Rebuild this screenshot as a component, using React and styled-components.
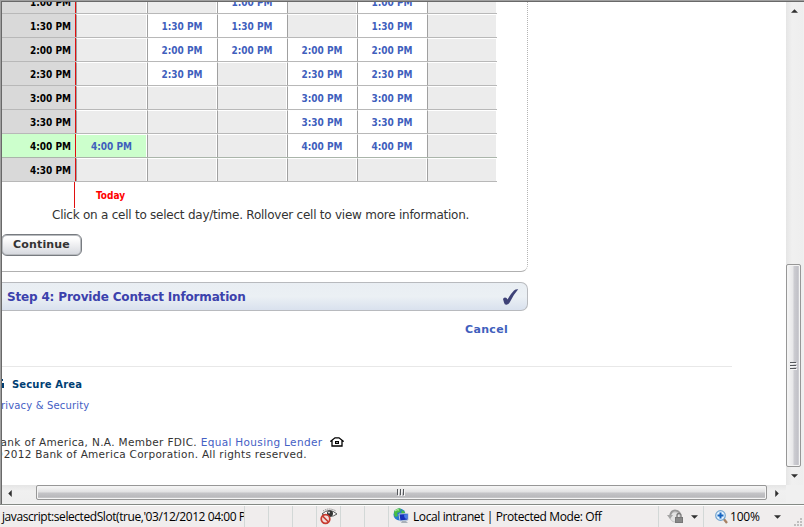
import React from "react";
import styled, { createGlobalStyle, css } from "styled-components";

const Global = createGlobalStyle`
  * { box-sizing: border-box; }
  body { margin: 0; background: #fff; overflow: hidden; font-family: "DejaVu Sans", Verdana, sans-serif; }
`;

const Window = styled.div`
  width: 804px;
  height: 527px;
  display: grid;
  grid-template-rows: 504px 23px;
  background: #f0f0f0;
`;
const Frame = styled.div`
  display: grid;
  grid-template-columns: 784px 17px;
  grid-template-rows: 483px 17px;
  border-top: 1px solid #a0a0a0;
  border-left: 1px solid #a0a0a0;
  box-shadow: inset 1px 1px 0 #696969;
  padding: 1px 0 0 1px;
`;
const Viewport = styled.div`
  overflow: hidden;
  background: #fff;
`;

const Panel = styled.section`
  width: 526px;
  height: 270px;
  overflow: hidden;
  border-bottom: 1px solid #b0b0b0;
  border-right: 1px dotted #b4b4b4;
  border-bottom-right-radius: 7px;
`;
const Schedule = styled.div`
  width: 495px;
  margin-top: -12px;
`;
const SlotRow = styled.div`
  display: grid;
  grid-template-columns: 73px 1px 71px repeat(5, 70px);
  grid-template-rows: 23px;
  height: 24px;
  border-bottom: 1px solid ${(p) => (p.$selected ? "#aab5aa" : "#b8b8b8")};
`;
const slotText = css`
  font: bold 10px/24px "DejaVu Sans Condensed", "DejaVu Sans", sans-serif;
  font-stretch: condensed;
  white-space: nowrap;
`;
const TimeLabel = styled.div`
  ${slotText}
  line-height: 26px;
  text-align: right;
  padding-right: 4px;
  color: #000;
  background: ${(p) => (p.$selected ? "#ccffcc" : "#d9d9d9")};
`;
const NowMarker = styled.div`
  background: #e01010;
`;
const Slot = styled.div`
  ${slotText}
  text-align: center;
  color: #3f5fbd;
  border-left: 1px solid #a0a0a0;
  border-top: 1px solid #fff;
  border-right: 1px solid #fff;
  background: ${(p) => (p.$selected ? "#ccffcc" : p.$open ? "#fff" : "#ececec")};
  ${(p) => p.$selected && "border-left-color: #ccffcc;"}
`;
const TodayRow = styled.div`
  height: 26px;
  margin-left: 72px;
  border-left: 1px solid #e01010;
  padding-left: 21px;
  ${slotText}
  line-height: 28px;
  color: #f00;
`;
const Instruction = styled.p`
  margin: 0 0 0 50px;
  font-size: 12px;
  line-height: 15px;
  height: 26px;
  white-space: nowrap;
  color: #333;
  letter-spacing: -0.24px;
`;
const ContinueButton = styled.button`
  display: block;
  width: 81px;
  height: 22px;
  margin: 0 0 0 -1px;
  padding: 0 0 2px 0;
  border: 1px solid #777b80;
  border-radius: 6px;
  box-shadow: inset 0 0 0 1px #b9bcc0;
  background: linear-gradient(#fff 15%, #f1f1f3 45%, #d5d8de);
  color: #333;
  font: bold 11px "DejaVu Sans", sans-serif;
  letter-spacing: 0.15px;
`;

const StepBar = styled.section`
  display: flex;
  align-items: center;
  justify-content: space-between;
  width: 526px;
  height: 29px;
  margin-top: 10px;
  padding: 0 8px 0 5px;
  border: solid #b8babe;
  border-width: 1px 1px 1px 0;
  border-radius: 0 7px 7px 0;
  background: linear-gradient(#e9eef3, #ebf0f4 50%, #d9e1ee);
`;
const StepTitle = styled.h2`
  margin: 0;
  font: bold 12px "DejaVu Sans", sans-serif;
  letter-spacing: -0.17px;
  color: #3c42ac;
  white-space: nowrap;
`;
const CancelRow = styled.div`
  display: flex;
  justify-content: flex-end;
  width: 506px;
  height: 55px;
  padding-top: 11px;
`;
const Cancel = styled.a`
  font: bold 11px/16px "DejaVu Sans", sans-serif;
  letter-spacing: 0.3px;
  color: #3f5fbd;
`;
const Footer = styled.footer`
  width: 730px;
  border-top: 1px solid #e8e8e8;
  font-size: 10px;
  color: #333;
`;
const SecureLine = styled.div`
  display: flex;
  align-items: center;
  gap: 5px;
  height: 14px;
  margin-top: 10px;
  font-weight: bold;
  letter-spacing: 0.15px;
  color: #003e73;
`;
const FooterLink = styled.a`
  color: #4460c4;
`;
const FooterLine = styled.div`
  display: flex;
  align-items: center;
  height: 12px;
  margin-top: ${(p) => p.$gap || 0}px;
  margin-left: ${(p) => p.$shift}px;
  font-size: ${(p) => p.$size || 10}px;
  letter-spacing: ${(p) => p.$spacing || 0}px;
  white-space: pre;
`;

const VScroll = styled.div`
  display: grid;
  grid-template-rows: 17px 245px 203px 18px;
  background: linear-gradient(90deg, #e5e5e5, #f0f0f0 35%, #eee);
`;
const HScroll = styled.div`
  display: grid;
  grid-template-columns: 34px 731px 19px;
  background: linear-gradient(#e5e5e5, #f0f0f0 35%, #eee);
`;
const ArrowBox = styled.div`
  display: flex;
  align-items: center;
  justify-content: center;
  ${(p) => p.$start && "width: 16px;"}
`;
const Thumb = styled.div`
  display: flex;
  align-items: center;
  justify-content: center;
  border: 1px solid #979797;
  border-radius: 2px;
  box-shadow: inset 0 0 0 1px #f4f4f4;
  background: ${(p) =>
    p.$vertical
      ? "linear-gradient(90deg, #f3f3f3 10%, #e6e6e8 48%, #cdcdd2 52%, #c2c2c8 82%, #dedee2)"
      : "linear-gradient(#f3f3f3 10%, #e0e0e1 48%, #c5c5c8 52%, #bababd 82%, #d5d5d7)"};
  ${(p) => (p.$vertical ? "width: 15px;" : "height: 15px; padding-right: 2px;")}
`;

const StatusBar = styled.footer`
  display: grid;
  grid-template-columns: 245px repeat(6, 24px) 270px 45px 100px;
  border-top: 1px solid #858a85;
  box-shadow: inset 0 1px 0 #fff;
  background: #f0eded;
  padding-top: 1px;
  font: 12px/21px "Open Sans", "Noto Sans", sans-serif;
  color: #000;
`;
const StatusCell = styled.div`
  display: flex;
  align-items: center;
  overflow: hidden;
  white-space: nowrap;
  padding-left: ${(p) => p.$pad || 0}px;
  gap: ${(p) => p.$gap || 0}px;
  letter-spacing: ${(p) => p.$spacing || 0}px;
  border-right: 1px solid ${(p) => (p.$last ? "transparent" : "#d3d8d7")};
`;
const Push = styled.span`
  flex: 1;
`;

const arrows = {
  up: "M0 4L4 0L8 4Z",
  down: "M0 0H8L4 4Z",
  left: "M4 0V8L0 4Z",
  right: "M0 0V8L4 4Z",
};
function Arrow({ dir, size = 7 }) {
  const wide = dir === "up" || dir === "down";
  return (
    <svg width={wide ? size : 4} height={wide ? 4 : size} viewBox={wide ? "0 0 8 4" : "0 0 4 8"}>
      <path d={arrows[dir]} fill="#303030" />
    </svg>
  );
}
function Grip({ vertical }) {
  return (
    <svg width="9" height="9" shapeRendering="crispEdges">
      {vertical ? (
        <>
          <path d="M1 1.500h6M1 4.500h6M1 7.500h6" stroke="#55585c" />
          <path d="M2 2.500h6M2 5.500h6M2 8.500h6" stroke="#f5f5f5" />
        </>
      ) : (
        <>
          <path d="M1.500 1v6M4.500 1v6M7.500 1v6" stroke="#55585c" />
          <path d="M2.500 2v6M5.500 2v6M8.500 2v6" stroke="#f5f5f5" />
        </>
      )}
    </svg>
  );
}
function CheckMark() {
  return (
    <svg width="17" height="18" viewBox="0 0 17 18">
      <path d="M1 11Q1.500 9.500 3 9.500Q4.800 9.500 5.500 11.500Q8.500 6 12 2.500Q13.500 1 16.200 1.200Q12 6 8.500 13Q6.800 16.500 4.500 16.800Q2.500 17 2 14.500Z" fill="#3e4277" />
    </svg>
  );
}
function Lock() {
  return (
    <svg width="5" height="10" viewBox="0 0 5 10" shapeRendering="crispEdges">
      <path d="M0 4H2V9H0ZM0 0H1V2H0Z" fill="#003e73" />
    </svg>
  );
}
function House() {
  return (
    <svg width="14" height="10" viewBox="0 0 14 10">
      <path d="M1 4L5 .8H9L13 4H12V9H2V4Z" fill="#fff" stroke="#000" strokeWidth="1.3" />
      <path d="M5 4H9V7H5Z" />
      <path d="M6 5.500h2" stroke="#fff" strokeWidth=".6" />
    </svg>
  );
}
function BlockedEye() {
  return (
    <svg width="18" height="17" viewBox="0 0 18 17">
      <path d="M2 6Q9-1 17 6Q10 11 2 6Z" fill="#f8f8f8" stroke="#555" />
      <path d="M3 3Q9-1 16 3" fill="none" stroke="#777" strokeDasharray="1 1" />
      <circle cx="10" cy="5.500" r="3" fill="#333" />
      <circle cx="9" cy="4.500" r="1" fill="#ddd" />
      <circle cx="5.500" cy="11" r="4.300" fill="#f4dedb" stroke="#c73b31" strokeWidth="1.700" />
      <path d="M2.500 8L8.500 14" stroke="#c73b31" strokeWidth="1.700" />
    </svg>
  );
}
function Globe() {
  return (
    <svg width="17" height="17" viewBox="0 0 17 17">
      <circle cx="6.500" cy="6.500" r="6" fill="#2878d0" />
      <path d="M2 2Q6-1 8 1L7 4L4 5L5 8L2 9Q0 5 2 2ZM9 2L12 4L11 7L8 5Z" fill="#47bd45" />
      <path d="M2 3Q4 1 6 2" stroke="#c5f1ba" fill="none" />
      <path d="M6 6L15 5.500V12L7 13Z" fill="#142fba" stroke="#b5c7dc" />
      <path d="M11 6.500L14.500 6V11Q11 11 11 6.500Z" fill="#4c7de6" />
      <path d="M9 13h4l2 2H8Z" fill="#a9b0b8" />
    </svg>
  );
}
function PrivacyLock() {
  return (
    <svg width="17" height="15" viewBox="0 0 17 15">
      <circle cx="8" cy="8" r="5" fill="#e3e3e3" stroke="#c4c4c4" />
      <path d="M3 7Q4 1.500 8 1.500Q11 1.500 13 4" fill="none" stroke="#999" strokeWidth="1.800" />
      <path d="M0 6H6L3 10Z" fill="#a5a5a5" />
      <path d="M10 8V6.500a2 2 0 0 1 4 0V8" fill="none" stroke="#777" strokeWidth="1.300" />
      <path d="M8 8H16V14H8Z" fill="#777" />
      <path d="M9 10h6M9 12h6" stroke="#aaa" strokeWidth=".7" />
    </svg>
  );
}
function Magnifier() {
  return (
    <svg width="13" height="14" viewBox="0 0 13 14">
      <path d="M8 8L12 13" stroke="#a77f61" strokeWidth="2.300" />
      <circle cx="5.500" cy="5.500" r="4.800" fill="#e4f3ff" stroke="#72a3ce" strokeWidth="1.200" />
      <path d="M5.500 2.500v6M2.500 5.500h6" stroke="#1764c0" strokeWidth="2" />
    </svg>
  );
}
const SizeGrip = styled.svg`
  align-self: flex-end;
  margin-left: 10px;
`;

const slots = [
  ["1:00 PM", [2, 4]],
  ["1:30 PM", [1, 2, 4]],
  ["2:00 PM", [1, 2, 3, 4]],
  ["2:30 PM", [1, 3, 4]],
  ["3:00 PM", [3, 4]],
  ["3:30 PM", [3, 4]],
  ["4:00 PM", [0, 3, 4]],
  ["4:30 PM", []],
];
const days = [0, 1, 2, 3, 4, 5];

export default function App() {
  return (
    <>
      <Global />
      <Window>
        <Frame>
          <Viewport>
            <Panel>
              <Schedule>
                {slots.map(([time, open], row) => (
                  <SlotRow key={time} $selected={row === 6}>
                    <TimeLabel $selected={row === 6}>{time}</TimeLabel>
                    <NowMarker />
                    {days.map((day) => (
                      <Slot key={day} $open={open.includes(day)} $selected={row === 6 && day === 0}>
                        {open.includes(day) ? time : ""}
                      </Slot>
                    ))}
                  </SlotRow>
                ))}
              </Schedule>
              <TodayRow>Today</TodayRow>
              <Instruction>Click on a cell to select day/time. Rollover cell to view more information.</Instruction>
              <ContinueButton>Continue</ContinueButton>
            </Panel>
            <StepBar>
              <StepTitle>Step 4: Provide Contact Information</StepTitle>
              <CheckMark />
            </StepBar>
            <CancelRow>
              <Cancel>Cancel</Cancel>
            </CancelRow>
            <Footer>
              <SecureLine>
                <Lock />
                <span>Secure Area</span>
              </SecureLine>
              <FooterLine $gap={8} $shift={-7} $spacing={0.16}>
                <FooterLink>Privacy &amp; Security</FooterLink>
              </FooterLine>
              <FooterLine $gap={25} $shift={-9} $size={10.5} $spacing={0.34}>
                <span>Bank of America, N.A. Member FDIC. </span>
                <FooterLink>Equal Housing Lender</FooterLink>
                <span>{"  "}</span>
                <House />
              </FooterLine>
              <FooterLine $shift={-9} $size={10.5} $spacing={0.28}>©2012 Bank of America Corporation. All rights reserved.</FooterLine>
            </Footer>
          </Viewport>
          <VScroll>
            <ArrowBox><Arrow dir="up" /></ArrowBox>
            <span />
            <Thumb $vertical><Grip vertical /></Thumb>
            <ArrowBox><Arrow dir="down" /></ArrowBox>
          </VScroll>
          <HScroll>
            <ArrowBox $start><Arrow dir="left" /></ArrowBox>
            <Thumb><Grip /></Thumb>
            <ArrowBox><Arrow dir="right" /></ArrowBox>
          </HScroll>
        </Frame>
        <StatusBar>
          <StatusCell $pad={2} $spacing={-0.43}>javascript:selectedSlot(true,'03/12/2012 04:00 PM')</StatusCell>
          <StatusCell />
          <StatusCell />
          <StatusCell />
          <StatusCell $pad={3}><BlockedEye /></StatusCell>
          <StatusCell />
          <StatusCell />
          <StatusCell $pad={4} $gap={3} $spacing={-0.4}>
            <Globe />
            <span>Local intranet | Protected Mode: Off</span>
          </StatusCell>
          <StatusCell $pad={8} $gap={7}>
            <PrivacyLock />
            <Arrow dir="down" />
          </StatusCell>
          <StatusCell $pad={11} $gap={2} $spacing={-0.2} $last>
            <Magnifier />
            <span>100%</span>
            <Push />
            <Arrow dir="down" />
            <SizeGrip width="10" height="10">
              <path d="M7 1h2v2H7zM7 4h2v2H7zM7 7h2v2H7zM4 4h2v2H4zM4 7h2v2H4zM1 7h2v2H1z" fill="#c0bebe" />
            </SizeGrip>
          </StatusCell>
        </StatusBar>
      </Window>
    </>
  );
}
